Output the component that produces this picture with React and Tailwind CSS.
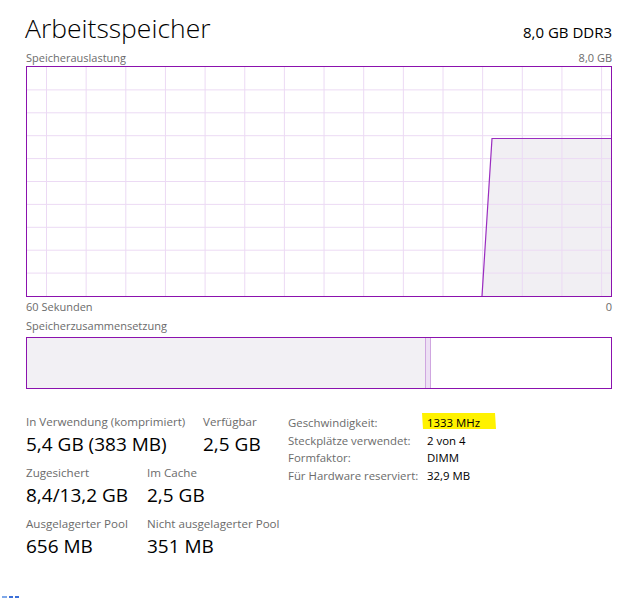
import React from "react";

function UsageChart() {
  const cols = [];
  for (let i = 0; i < 15; i++) cols.push(19.5 + i * 39.65);
  const rows = [];
  for (let i = 1; i < 10; i++) rows.push(i * 22.9);

  return (
    <div className="w-[586px] h-[231px] border border-[#8b12ae] bg-white">
      <svg width="584" height="229" viewBox="0 0 584 229" className="block">
        <polygon points="455,229 465,71.5 584,71.5 584,229" fill="#f1eff3" />
        {cols.map((x) => (
          <line key={"c" + x} x1={x} y1="0" x2={x} y2="229" stroke="#ecdaf4" strokeWidth="1" />
        ))}
        {rows.map((y) => (
          <line key={"r" + y} x1="0" y1={y} x2="584" y2={y} stroke="#ecdaf4" strokeWidth="1" />
        ))}
        <polyline points="455,229 465,71.5 584,71.5" fill="none" stroke="#9a2cc0" strokeWidth="1.2" />
      </svg>
    </div>
  );
}

function CompositionBar() {
  return (
    <div className="w-[586px] h-[52px] border border-[#8b12ae] flex bg-white">
      <div className="w-[398px] bg-[#f2f0f4]" />
      <div className="w-[6px] border-x border-[#cfa6e0] bg-[#ede0f4]" />
      <div className="flex-1 bg-white" />
    </div>
  );
}

function Stat({ label, value, width }) {
  return (
    <div className={width}>
      <div className="text-[11.6px] leading-[18px] text-[#6b6b6b] whitespace-nowrap">{label}</div>
      <div className="text-[19px] leading-[26px] text-black whitespace-nowrap">{value}</div>
    </div>
  );
}

const details = [
  ["Geschwindigkeit:", "1333 MHz"],
  ["Steckplätze verwendet:", "2 von 4"],
  ["Formfaktor:", "DIMM"],
  ["Für Hardware reserviert:", "32,9 MB"],
];

export default function App() {
  return (
    <div className="relative w-[635px] h-[599px] bg-white pl-[26px] font-['Open_Sans',sans-serif] overflow-hidden">
      <div className="w-[586px] flex items-baseline justify-between pt-[10px]">
        <h1 className="text-[26.5px] leading-[36px] font-light text-black -ml-[1px]">Arbeitsspeicher</h1>
        <span className="text-[15px] text-black">8,0 GB DDR3</span>
      </div>

      <div className="w-[586px] flex justify-between text-[11px] leading-[16px] text-[#6b6b6b] mt-[4px]">
        <span>Speicherauslastung</span>
        <span>8,0 GB</span>
      </div>
      <UsageChart />
      <div className="w-[586px] flex justify-between text-[11px] leading-[16px] text-[#6b6b6b] mt-[2px]">
        <span>60 Sekunden</span>
        <span>0</span>
      </div>

      <div className="text-[11px] leading-[16px] text-[#6b6b6b] mt-[3px] mb-[3px]">Speicherzusammensetzung</div>
      <CompositionBar />

      <div className="flex mt-[24px]">
        <div className="w-[262px] flex flex-col gap-[7px]">
          <div className="flex">
            <Stat width="w-[177px]" label="In Verwendung (komprimiert)" value="5,4 GB (383 MB)" />
            <Stat label="Verfügbar" value="2,5 GB" />
          </div>
          <div className="flex">
            <Stat width="w-[121px]" label="Zugesichert" value="8,4/13,2 GB" />
            <Stat label="Im Cache" value="2,5 GB" />
          </div>
          <div className="flex">
            <Stat width="w-[121px]" label="Ausgelagerter Pool" value="656 MB" />
            <Stat label="Nicht ausgelagerter Pool" value="351 MB" />
          </div>
        </div>

        <div className="flex flex-col pt-[1px]">
          {details.map(([label, value], i) => (
            <div key={label} className="flex text-[11.4px] leading-[17.5px] whitespace-nowrap">
              <span className="w-[139px] text-[#6b6b6b]">{label}</span>
              <span className="relative text-black">
                {i === 0 && (
                  <svg
                    className="absolute -left-[5px] -top-[1px]"
                    width="74"
                    height="17"
                    viewBox="0 0 74 17"
                  >
                    <polygon points="0,0 73,0 74,16 1,16" fill="#fff200" />
                  </svg>
                )}
                <span className="relative">{value}</span>
              </span>
            </div>
          ))}
        </div>
      </div>

      <div className="absolute left-[2px] bottom-[1px] flex gap-[2px] items-end">
        <span className="w-[5px] h-[2px] bg-[#7fa8e8]" />
        <span className="w-[4px] h-[2px] bg-[#3b6fd8]" />
        <span className="w-[4px] h-[2px] bg-[#3b6fd8]" />
      </div>
    </div>
  );
}
